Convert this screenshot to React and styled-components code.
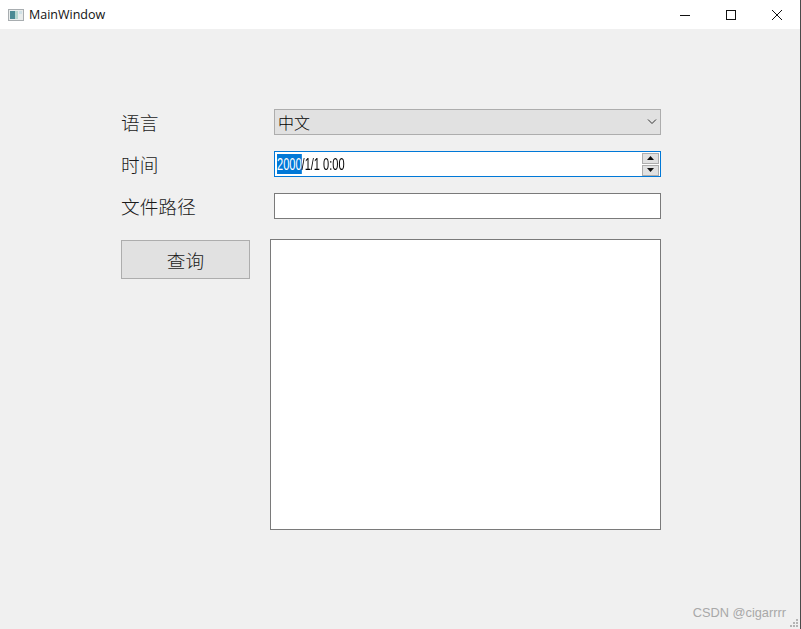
import React from 'react'
import styled, { createGlobalStyle } from 'styled-components'

const GlobalStyle = createGlobalStyle`
  html, body {
    margin: 0;
    padding: 0;
    background: #f0f0f0;
  }
`

const App = () => {
  return (
    <SWindow>
      <GlobalStyle />
      <STitleBar>
        <SAppIcon width="16" height="16" viewBox="0 0 16 16">
          <rect x="0.5" y="2.5" width="15" height="11" fill="#e8ecec" stroke="#a8adb0" />
          <rect x="2" y="4" width="5" height="8" fill="#4a8a94" />
          <rect x="7" y="4" width="3" height="8" fill="#b5d6cf" />
          <rect x="11" y="4" width="3" height="3" fill="#cfe0e6" />
        </SAppIcon>
        <STitle>MainWindow</STitle>
        <SControls>
          <SControl>
            <svg width="12" height="12" viewBox="0 0 12 12"><path d="M1 6.5h10" stroke="#111" fill="none" /></svg>
          </SControl>
          <SControl>
            <svg width="12" height="12" viewBox="0 0 12 12"><rect x="1.5" y="1.5" width="9" height="9" stroke="#111" fill="none" /></svg>
          </SControl>
          <SControl>
            <svg width="12" height="12" viewBox="0 0 12 12"><path d="M1 1l10 10M11 1L1 11" stroke="#111" fill="none" /></svg>
          </SControl>
        </SControls>
      </STitleBar>

      <SBody>
        <SRow>
          <SLabel>语言</SLabel>
          <SCombo>
            <span>中文</span>
            <svg width="10" height="6" viewBox="0 0 10 6"><path d="M1 0.5L5 4.5l4-4" stroke="#333" fill="none" /></svg>
          </SCombo>
        </SRow>
        <SRow>
          <SLabel>时间</SLabel>
          <SDateField>
            <SDateText><SSelected>2000</SSelected>/1/1 0:00</SDateText>
            <SSpin>
              <SSpinButton>
                <svg width="7" height="4" viewBox="0 0 7 4"><path d="M3.5 0L7 4H0z" fill="#111" /></svg>
              </SSpinButton>
              <SSpinButton>
                <svg width="7" height="4" viewBox="0 0 7 4"><path d="M0 0h7L3.5 4z" fill="#111" /></svg>
              </SSpinButton>
            </SSpin>
          </SDateField>
        </SRow>
        <SRow>
          <SLabel>文件路径</SLabel>
          <SInput />
        </SRow>
        <SBottom>
          <SButton>查询</SButton>
          <SOutput />
        </SBottom>
      </SBody>

      <SWatermark>CSDN @cigarrrr</SWatermark>
      <SGrip width="8" height="8" viewBox="0 0 8 8">
        <path d="M6 0h2v2H6zM3 3h2v2H3zM6 3h2v2H6zM0 6h2v2H0zM3 6h2v2H3zM6 6h2v2H6z" fill="#b4b4b4" />
      </SGrip>
    </SWindow>
  )
}

export default App

const SWindow = styled.div`
  position: relative;
  width: 800px;
  height: 629px;
  background: #f0f0f0;
  border-right: 1px solid #4a4a4a;
  overflow: hidden;
  font-family: "Noto Sans CJK SC", "Liberation Sans", sans-serif;
`

const STitleBar = styled.div`
  display: flex;
  align-items: center;
  height: 29px;
  padding-left: 8px;
  background: #fff;
`

const SAppIcon = styled.svg`
  flex: none;
`

const STitle = styled.div`
  margin-left: 5px;
  font-family: "Open Sans", "Liberation Sans", sans-serif;
  font-size: 12.5px;
  color: #111;
`

const SControls = styled.div`
  display: flex;
  margin-left: auto;
`

const SControl = styled.div`
  display: flex;
  align-items: center;
  justify-content: center;
  width: 46px;
  height: 29px;
`

const SBody = styled.div`
  display: flex;
  flex-direction: column;
  gap: 16px;
  width: 540px;
  padding: 80px 0 0 121px;
`

const SRow = styled.div`
  display: flex;
  align-items: center;
  height: 26px;
`

const SLabel = styled.div`
  width: 153px;
  font-size: 18.67px;
  font-weight: 300;
  line-height: 26px;
  color: #1a1a1a;
`

const SCombo = styled.div`
  box-sizing: border-box;
  display: flex;
  align-items: center;
  justify-content: space-between;
  width: 387px;
  height: 26px;
  padding: 0 3px 0 3px;
  background: #e1e1e1;
  border: 1px solid #adadad;
  font-size: 16px;
  font-weight: 300;
  color: #000;
`

const SDateField = styled.div`
  box-sizing: border-box;
  display: flex;
  align-items: center;
  justify-content: space-between;
  width: 387px;
  height: 26px;
  padding: 0 1px 0 2px;
  background: #fff;
  border: 1px solid #0078d7;
`

const SDateText = styled.div`
  align-self: flex-start;
  margin-top: 2px;
  font-family: "Liberation Sans", sans-serif;
  font-size: 16px;
  line-height: 22px;
  color: #000;
  transform: scaleX(0.69);
  transform-origin: left center;
`

const SSelected = styled.span`
  display: inline-block;
  vertical-align: top;
  height: 20px;
  overflow: hidden;
  background: #0078d7;
  color: #fff;
`

const SSpin = styled.div`
  display: flex;
  flex-direction: column;
  gap: 1px;
`

const SSpinButton = styled.div`
  box-sizing: border-box;
  display: flex;
  align-items: center;
  justify-content: center;
  width: 17px;
  height: 11px;
  background: #e1e1e1;
  border: 1px solid #adadad;
`

const SInput = styled.div`
  box-sizing: border-box;
  width: 387px;
  height: 26px;
  background: #fff;
  border: 1px solid #7a7a7a;
`

const SBottom = styled.div`
  display: flex;
  align-items: flex-start;
  gap: 20px;
  margin-top: 4px;
`

const SButton = styled.div`
  box-sizing: border-box;
  display: flex;
  align-items: center;
  justify-content: center;
  width: 129px;
  height: 39px;
  margin-top: 1px;
  background: #e1e1e1;
  border: 1px solid #adadad;
  font-size: 18.67px;
  font-weight: 300;
  color: #1a1a1a;
`

const SOutput = styled.div`
  box-sizing: border-box;
  width: 391px;
  height: 291px;
  background: #fff;
  border: 1px solid #7a7a7a;
`

const SWatermark = styled.div`
  position: absolute;
  right: 14px;
  bottom: 9px;
  font-family: "Liberation Sans", sans-serif;
  font-size: 12.8px;
  color: #a8a8a8;
`

const SGrip = styled.svg`
  position: absolute;
  right: 2px;
  bottom: 2px;
`
